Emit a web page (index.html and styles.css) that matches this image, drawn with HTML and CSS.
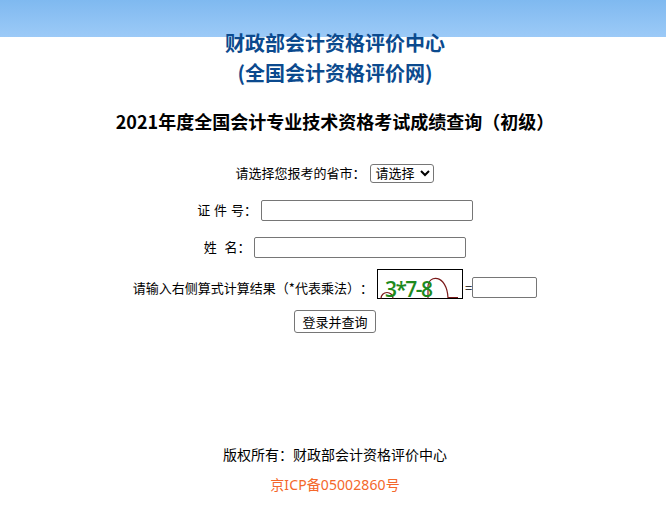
FILE: index.html
```html
<!DOCTYPE html>
<html lang="zh-CN">
<head>
<meta charset="utf-8">
<title>成绩查询</title>
<link rel="stylesheet" href="styles.css">
</head>
<body>
<div class="page">
  <h1 class="org">财政部会计资格评价中心<br>(全国会计资格评价网)</h1>
  <h2 class="exam">2021年度全国会计专业技术资格考试成绩查询（初级）</h2>
  <form class="form">
    <div class="row"><span class="label">请选择您报考的省市： </span><select class="select"><option>请选择</option></select></div>
    <div class="row"><span class="label">证 件 号： </span><input class="input long" type="text"></div>
    <div class="row"><span class="label">姓  名： </span><input class="input long" type="text"></div>
    <div class="row row-captcha">
      <span class="label">请输入右侧算式计算结果（*代表乘法）：</span>
      <svg class="captcha" viewBox="0 0 84 28" width="86" height="30" aria-label="验证码">
        <path class="noise" d="M3 28.5A6 6 0 0 1 15 28.5M50 28.5V17C50 4 69 4 70 28M70 27.5H80"/>
        <text class="code" x="7" y="26.5" textLength="48" lengthAdjust="spacing">3*7-8</text>
      </svg>
      <span class="eq">=</span><input class="input short" type="text">
    </div>
    <div class="row"><button class="submit" type="button">登录并查询</button></div>
  </form>
  <footer class="footer">
    <p class="line">版权所有：财政部会计资格评价中心</p>
    <p class="line icp">京ICP备05002860号</p>
  </footer>
</div>
</body>
</html>
```
FILE: styles.css
```css
* { box-sizing: border-box; }
html, body { margin: 0; padding: 0; background: #fff; }
body {
  font-family: "Noto Sans CJK SC", "Noto Sans", sans-serif;
  color: #000;
  font-size: 13px;
  text-spacing-trim: space-all;
}
.page {
  width: 666px;
  height: 505px;
  overflow: hidden;
  padding: 28px 0 0 4px;
  background: linear-gradient(#7fb9f0, #9ccaf7) no-repeat top / 100% 37px;
}
.org {
  margin: 0;
  text-align: center;
  font-size: 20px;
  line-height: 30px;
  font-weight: 700;
  color: #0b4a8e;
}
.exam {
  margin: 18px 0 19px;
  text-align: center;
  font-size: 18px;
  line-height: 30px;
  font-weight: 700;
}
.row {
  height: 37px;
  display: flex;
  justify-content: center;
  align-items: center;
}
.label {
  white-space: pre;
  word-spacing: 1px;
  line-height: 20px;
  padding-bottom: 2px;
}
.select {
  width: 64px;
  height: 19px;
  margin-left: 1px;
  padding: 0;
  font: 13px "Liberation Sans", "Noto Sans CJK SC", sans-serif;
  background: #fff;
  border: 1px solid #767676;
  border-radius: 3px;
}
.input {
  height: 21px;
  padding: 1px 2px;
  background: #fff;
  border: 1px solid #767676;
  border-radius: 2px;
}
.long { width: 212px; }
.short { width: 65px; }
.row-captcha {
  align-items: flex-end;
  padding-bottom: 4px;
}
.row-captcha .label,
.row-captcha .eq,
.row-captcha .input { margin-bottom: 1px; padding-bottom: 0; }
.captcha {
  flex: none;
  margin-left: 4px;
  border: 1px solid #000;
  overflow: visible;
}
.code {
  font-family: "Open Sans", sans-serif;
  font-weight: 600;
  font-size: 21px;
  fill: #1d8a1d;
}
.noise {
  fill: none;
  stroke: #7a1a1a;
  stroke-width: 1.2;
}
.eq { margin-left: 2px; line-height: 20px; }
.submit {
  width: 82px;
  height: 23px;
  padding: 0;
  font: 13px "Liberation Sans", "Noto Sans CJK SC", sans-serif;
  color: #000;
  background: #fff;
  border: 1px solid #767676;
  border-radius: 3px;
}
.footer { margin-top: 99px; }
.line {
  margin: 0;
  text-align: center;
  font-size: 14px;
  line-height: 30px;
}
.icp {
  padding-top: 1px;
  letter-spacing: 0.1px;
  color: #f4672a;
  font-family: "Noto Sans", "Noto Sans CJK SC", sans-serif;
}
```
